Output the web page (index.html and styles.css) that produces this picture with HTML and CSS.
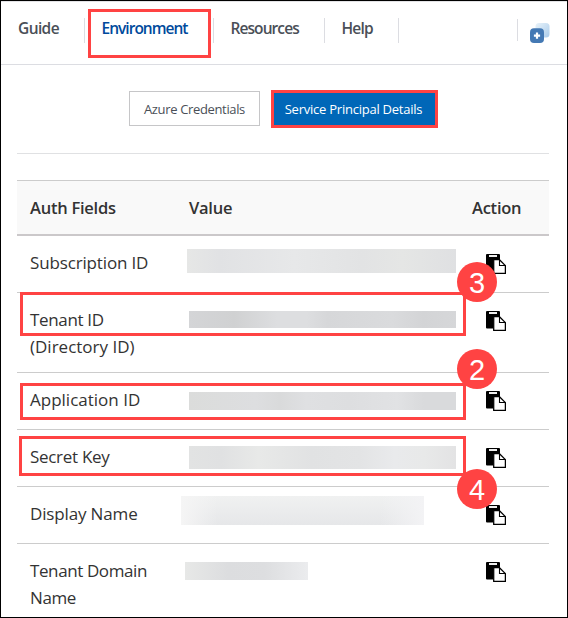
FILE: index.html
```html
<!DOCTYPE html>
<html lang="en">
<head>
<meta charset="utf-8">
<title>Environment</title>
<link rel="stylesheet" href="styles.css">
</head>
<body>
<svg class="defs" aria-hidden="true">
  <symbol id="paste" viewBox="0 0 20 20">
    <path fill="#000" d="M0 1Q0 0 1 0H13Q14 0 14 1V6H8Q7 6 7 7V17.500H1Q0 17.500 0 16.500Z"/>
    <path fill="#eee" d="M3 1h8v2H3z"/>
    <path fill="#fff" stroke="#000" stroke-width="1.300" stroke-linejoin="round" d="M7.700 5.700h5.800l5.900 5.900v7.800H7.700z"/>
    <path fill="none" stroke="#000" stroke-width="1.100" d="M13.500 6v5.500h5.700"/>
  </symbol>
</svg>
<div class="panel">
  <nav class="tabs">
    <a class="tab guide"><span>Guide</span></a>
    <a class="tab environment"><span>Environment</span></a>
    <a class="tab resources"><span>Resources</span></a>
    <a class="tab help"><span>Help</span></a>
    <div class="tools">
      <svg width="20" height="20" viewBox="0 0 20 20">
        <defs><linearGradient id="back" x1="0" y1="0" x2="1" y2="1"><stop offset="0" stop-color="#e9f3fa"/><stop offset="1" stop-color="#a9cbea"/></linearGradient></defs>
        <rect x="5.500" y="0" width="14" height="14.500" rx="3.500" fill="url(#back)"/>
        <rect x="0" y="5.300" width="14" height="14.700" rx="4" fill="#4479b4"/>
        <path d="M7 9.500v6.200M3.900 12.600h6.200" stroke="#fff" stroke-width="2.200"/>
      </svg>
    </div>
  </nav>
  <div class="switch">
    <button class="btn credentials"><span>Azure Credentials</span></button>
    <button class="btn details"><span>Service Principal Details</span></button>
  </div>
  <div class="table">
    <div class="row head"><div>Auth Fields</div><div>Value</div><div>Action</div></div>
    <div class="row"><div class="t-sub">Subscription ID</div><div><i class="mask m1"></i></div><div><svg class="copy"><use href="#paste"/></svg></div></div>
    <div class="row tall"><div><span class="t-tenant">Tenant ID</span><br>(Directory ID)</div><div><i class="mask m2"></i></div><div><svg class="copy"><use href="#paste"/></svg></div></div>
    <div class="row"><div>Application ID</div><div><i class="mask m3"></i></div><div><svg class="copy"><use href="#paste"/></svg></div></div>
    <div class="row"><div class="t-key">Secret Key</div><div><i class="mask m4"></i></div><div><svg class="copy"><use href="#paste"/></svg></div></div>
    <div class="row"><div class="t-name">Display Name</div><div><i class="mask m5"></i></div><div><svg class="copy"><use href="#paste"/></svg></div></div>
    <div class="row"><div class="t-domain">Tenant Domain<br>Name</div><div><i class="mask m6"></i></div><div><svg class="copy"><use href="#paste"/></svg></div></div>
  </div>
  <div class="mark mark-tab"></div>
  <div class="mark mark-tenant"></div>
  <div class="mark mark-app"></div>
  <div class="mark mark-key"></div>
  <div class="step step-3">3</div>
  <div class="step step-2">2</div>
  <div class="step step-4">4</div>
</div>
</body>
</html>
```

FILE: styles.css
```css
* { box-sizing: border-box; }
body { margin: 0; background: #fff; font-family: "Open Sans", "Noto Sans", sans-serif; color: #333; }
.defs { display: none; }
.panel { position: relative; width: 568px; height: 618px; border: 1px solid #000; overflow: hidden; background: #fff; }

.tabs { display: flex; height: 64px; border-top: 1px solid #e3e3e6; border-bottom: 1px solid #dcdde2; padding-top: 16px; }
.tab { height: 25px; border-right: 1px solid #dcdde2; padding-left: 17px; font-size: 15.5px; font-weight: 600; line-height: 21px; color: #4a4f57; white-space: nowrap; }
.guide { width: 84px; letter-spacing: -0.6px; }
.environment { width: 129px; color: #004a9c; letter-spacing: -0.98px; padding-left: 16.5px; }
.resources { width: 111px; letter-spacing: -0.92px; padding-left: 16.5px; }
.help { width: 74px; letter-spacing: -0.8px; padding-left: 16.5px; }
.tools { margin: 1px 17px 0 auto; width: 33px; height: 22px; border-left: 1px solid #dcdde2; padding: 4px 0 0 12px; }
.tools svg { display: block; }

.switch { display: flex; align-items: center; gap: 11px; margin: 0 18px 0 16px; height: 89px; padding: 0 0 2px 112px; border-bottom: 1px solid #e0e1e3; }
.btn { font-family: inherit; font-size: 13px; padding: 2px 0 0; border-radius: 0; white-space: nowrap; }
.credentials { width: 131px; height: 35px; border: 1px solid #c6c6c8; background: #fff; color: #4a4f57; letter-spacing: -0.35px; }
.details { width: 167px; height: 38px; margin-top: 2px; padding: 0 2px 0 0; border: 3px solid #ff4343; background: #0067b8; color: #fff; letter-spacing: -0.24px; }

.table { width: 532px; margin: 26px 0 0 16px; font-size: 17px; line-height: 27px; }
.row { display: grid; grid-template-columns: 159px 283px 90px; height: 57px; border-bottom: 1px solid #ccc; }
.row > div { padding: 13px 0 0 13px; white-space: nowrap; }
.row.tall { height: 80px; }
.row:last-child { height: 80px; border-bottom: 0; }
.row.head { height: 56px; border-top: 1px solid #ccc; border-bottom: 2px solid #cbc8ca; background: #f9f9f9; font-size: 16.5px; font-weight: 600; letter-spacing: -0.25px; }
.t-sub, .t-name { letter-spacing: -0.15px; }
.t-tenant { letter-spacing: -0.35px; }
.t-key { letter-spacing: -0.3px; }
.t-domain { letter-spacing: -0.4px; }
.copy { display: block; width: 20px; height: 20px; margin: 5px 0 0 14px; }
.mask { display: block; }
.m1 { width: 269px; height: 24px; margin-left: -2px; background: linear-gradient(90deg, #e6e7e6, #e1e2e4 12%, #e7e8e9 40%, #e2e3e4 65%, #e5e6e5 80%, #dfe0e2); }
.m2 { width: 267px; height: 17px; margin-top: 5px; background: linear-gradient(90deg, #d4d5d7, #d0d1d2 17%, #dddee0 33%, #dddee0 44%, #d6d7d9 52%, #dadbdd 76%, #d3d4d6 88%, #d6d7d9); }
.m3 { width: 267px; height: 18px; margin-top: 6px; background: linear-gradient(90deg, #dbdcdb, #dddee0 25%, #d9dadb 34%, #dfe0e2 44%, #dddee0 60%, #e1e2e4 78%, #d9dadc 88%, #d9dadc); }
.m4 { width: 267px; height: 23px; margin-top: 3px; background: linear-gradient(90deg, #e2e3e3, #e0e1e2 12%, #e8e9e8 26%, #e1e2e3 46%, #e3e4e5 64%, #e9eaec 77%, #e8e9e9 88%, #e3e3e4); }
.m5 { width: 243px; height: 29px; margin: -4px 0 0 -8px; background: linear-gradient(90deg, #f5f5f5, #f5f5f500 15%, #f3f3f500 82%, #f3f3f5), linear-gradient(#f0f1f1, #e6e7e9); }
.m6 { width: 123px; height: 18px; margin: 5px 0 0 -4px; background: linear-gradient(90deg, #e7e8e7, #dcdddf 35%, #dddee0 65%, #ebecee); }

.mark { position: absolute; border: 3px solid #ff4343; }
.mark-tab { left: 87px; top: 8px; width: 123px; height: 49px; }
.mark-tenant { left: 19px; top: 291px; width: 446px; height: 44px; }
.mark-app { left: 19px; top: 382px; width: 446px; height: 37px; }
.mark-key { left: 18px; top: 435px; width: 447px; height: 40px; }
.step { position: absolute; left: 456px; width: 40px; height: 40px; border-radius: 50%; background: #ff4343; color: #fff; font: 29px/42px "Liberation Sans", sans-serif; text-align: center; }
.step-3 { top: 261px; }
.step-2 { top: 348px; }
.step-4 { top: 468px; }
```
